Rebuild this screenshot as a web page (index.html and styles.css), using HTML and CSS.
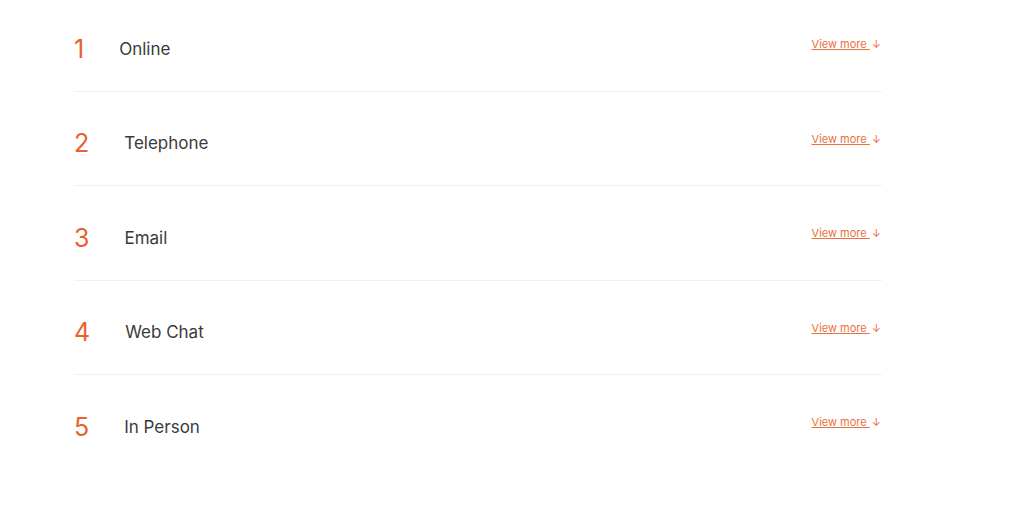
FILE: index.html
```html
<!DOCTYPE html>
<html lang="en">
  <head>
    <meta charset="UTF-8" />
    <title>Ways to contact us</title>
    <link rel="stylesheet" href="styles.css">
  </head>
  <body>
    <ul class="channels">
      <li class="channel">
        <span class="channel-num">1</span>
        <span class="channel-name">Online</span>
        <a class="channel-more" href="#">View more <span class="arrow">↓</span></a>
      </li>
      <li class="channel">
        <span class="channel-num">2</span>
        <span class="channel-name">Telephone</span>
        <a class="channel-more" href="#">View more <span class="arrow">↓</span></a>
      </li>
      <li class="channel">
        <span class="channel-num">3</span>
        <span class="channel-name">Email</span>
        <a class="channel-more" href="#">View more <span class="arrow">↓</span></a>
      </li>
      <li class="channel">
        <span class="channel-num">4</span>
        <span class="channel-name">Web Chat</span>
        <a class="channel-more" href="#">View more <span class="arrow">↓</span></a>
      </li>
      <li class="channel">
        <span class="channel-num">5</span>
        <span class="channel-name">In Person</span>
        <a class="channel-more" href="#">View more <span class="arrow">↓</span></a>
      </li>
    </ul>
  </body>
</html>
```

FILE: styles.css
```css
body {
  margin: 0;
  background: #fff;
  font-family: 'Inter', 'Roboto', sans-serif;
  color: #3a3a3c;
}
.channels {
  list-style: none;
  margin: 0 0 0 74px;
  padding: 0;
  width: 808px;
}
.channel {
  display: flex;
  align-items: center;
  height: 29.5px;
  padding: 36px 0 28px;
  border-bottom: 1px solid #f0f0f0;
}
.channel:first-child {
  padding-top: 33px;
}
.channel:last-child {
  border-bottom: none;
}
.channel-num {
  font-size: 25px;
  font-weight: 400;
  color: #e8622c;
  line-height: 30px;
  padding-top: 2px;
}
.channel-name {
  flex: 1;
  margin-left: 35px;
  font-size: 17px;
  line-height: 30px;
  padding-top: 2px;
}
.channel-more {
  align-self: flex-start;
  margin-top: 4px;
  margin-right: 1px;
  font-size: 11px;
  color: #eb6e3e;
  text-decoration: underline;
}
.channel-more .arrow {
  display: inline-block;
  margin-left: 2px;
  text-decoration: none;
}
```
